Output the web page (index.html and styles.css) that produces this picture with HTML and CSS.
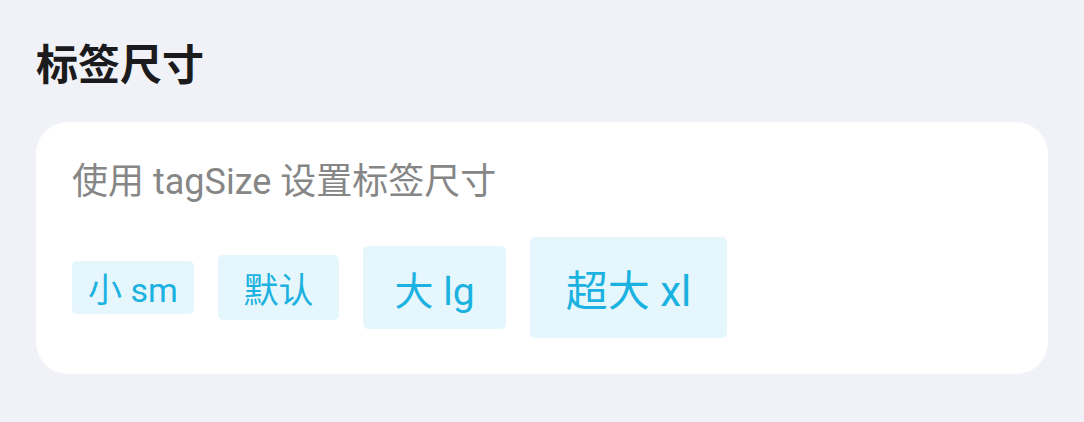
FILE: index.html
```html
<!DOCTYPE html>
<html lang="zh-CN">
<head>
<meta charset="utf-8">
<title>标签尺寸</title>
<link rel="stylesheet" href="styles.css">
</head>
<body>
<main class="page">
  <h2 class="section-title">标签尺寸</h2>
  <section class="card">
    <p class="card-desc">使用 tagSize 设置标签尺寸</p>
    <div class="tag-row">
      <span class="tag tag-sm">小 sm</span>
      <span class="tag tag-md">默认</span>
      <span class="tag tag-lg">大 lg</span>
      <span class="tag tag-xl">超大 xl</span>
    </div>
  </section>
</main>
</body>
</html>
```

FILE: styles.css
```css
html, body {
  margin: 0;
  padding: 0;
  background: #f1f2f7;
}

body {
  font-family: Roboto, "Noto Sans CJK SC", sans-serif;
  width: 1084px;
  height: 422px;
  overflow: hidden;
}

.page {
  padding: 37px 36px 0 36px;
}

.section-title {
  margin: 0 0 35px 0;
  font-size: 42px;
  line-height: 50px;
  font-weight: 700;
  color: #1b1b1d;
  font-family: "Noto Sans CJK SC", sans-serif;
}

.card {
  background: #ffffff;
  border-radius: 32px;
  padding: 36px;
}

.card-desc {
  margin: 0;
  font-size: 36px;
  line-height: 48px;
  color: #868686;
}

.tag-row {
  margin-top: 31px;
  height: 101px;
  display: flex;
  align-items: center;
  gap: 24px;
}

.tag {
  display: flex;
  align-items: center;
  justify-content: center;
  background: #e5f7fd;
  color: #1bb1e0;
  border-radius: 5px;
  box-sizing: border-box;
  white-space: nowrap;
}

.tag-sm {
  width: 122px;
  height: 53px;
  font-size: 34px;
}

.tag-md {
  width: 121px;
  height: 65px;
  font-size: 35px;
}

.tag-lg {
  width: 143px;
  height: 83px;
  font-size: 39px;
}

.tag-xl {
  width: 197px;
  height: 101px;
  font-size: 42px;
}
```
